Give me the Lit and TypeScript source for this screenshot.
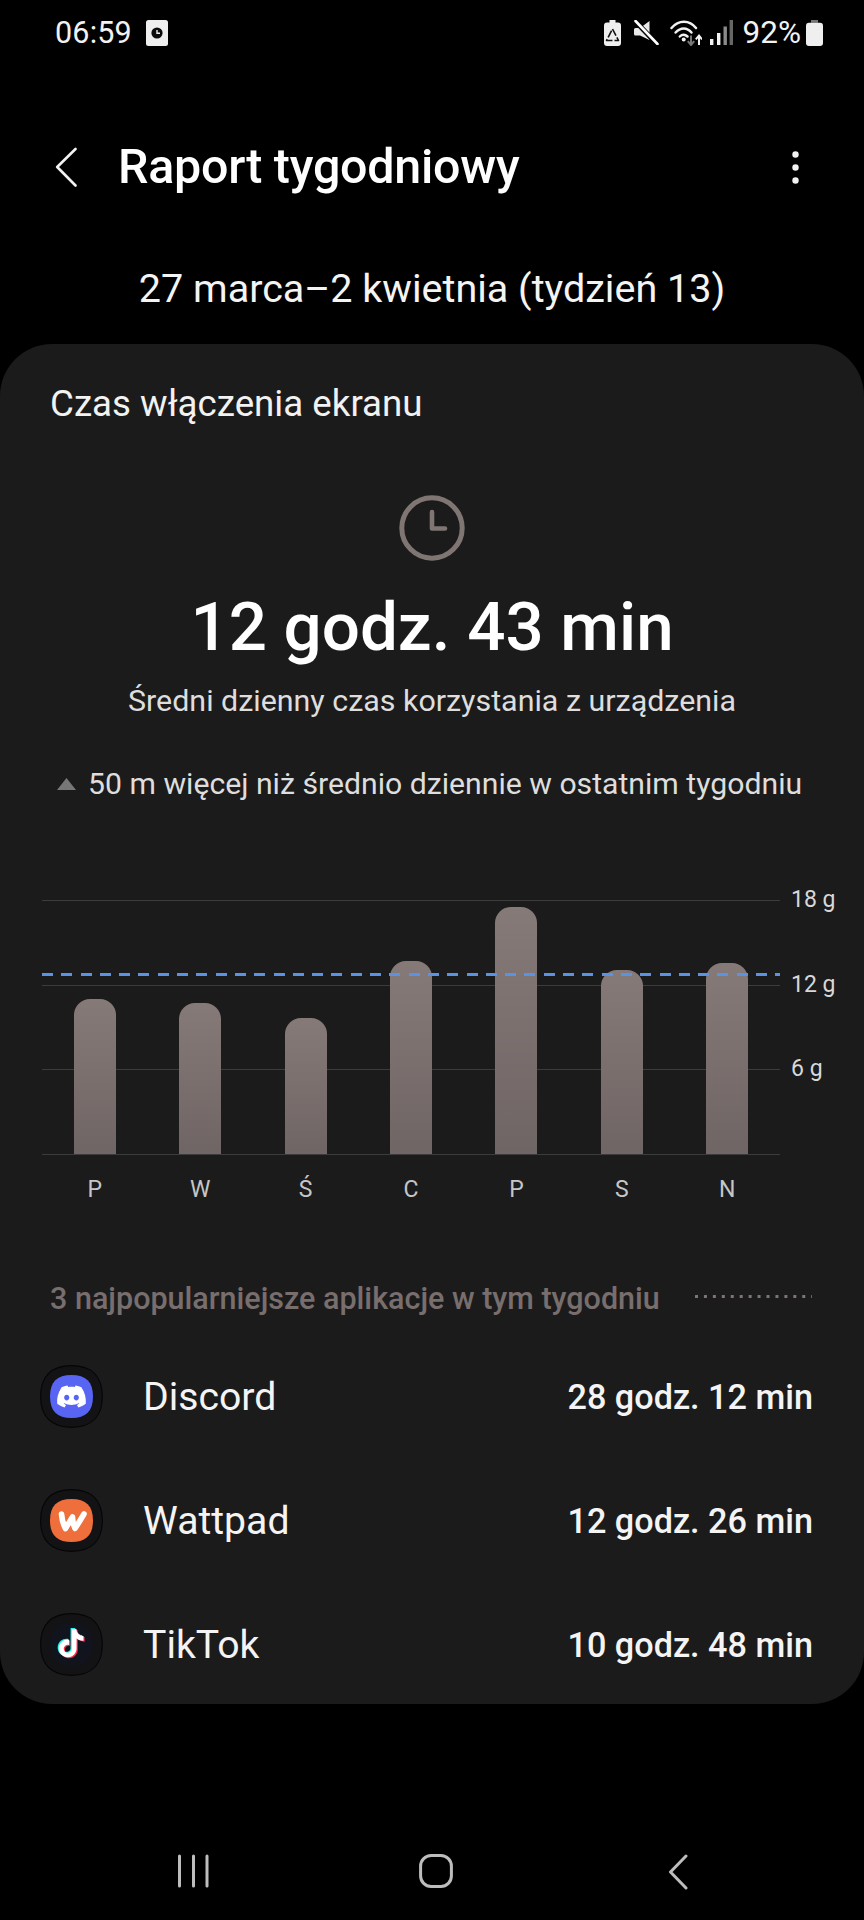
import { LitElement, html, css, svg } from "lit";
import { customElement } from "lit/decorators.js";

const BARS = [
  { d: "P", top: 999 },
  { d: "W", top: 1003 },
  { d: "Ś", top: 1018 },
  { d: "C", top: 961 },
  { d: "P", top: 907 },
  { d: "S", top: 970 },
  { d: "N", top: 963 },
];
const BASE = 1154;
const PLOT_TOP = 900;
const GRID = [
  { y: 900, label: "18 g" },
  { y: 985, label: "12 g" },
  { y: 1069, label: "6 g" },
  { y: 1154, label: "" },
];

const DISCORD =
  "M20.317 4.3698a19.7913 19.7913 0 00-4.8851-1.5152.0741.0741 0 00-.0785.0371c-.211.3753-.4447.8648-.6083 1.2495-1.8447-.2762-3.68-.2762-5.4868 0-.1636-.3933-.4058-.8742-.6177-1.2495a.077.077 0 00-.0785-.037 19.7363 19.7363 0 00-4.8852 1.515.0699.0699 0 00-.0321.0277C.5334 9.0458-.319 13.5799.0992 18.0578a.0824.0824 0 00.0312.0561c2.0528 1.5076 4.0413 2.4228 5.9929 3.0294a.0777.0777 0 00.0842-.0276c.4616-.6304.8731-1.2952 1.226-1.9942a.076.076 0 00-.0416-.1057c-.6528-.2476-1.2743-.5495-1.8722-.8923a.077.077 0 01-.0076-.1277c.1258-.0943.2517-.1923.3718-.2914a.0743.0743 0 01.0776-.0105c3.9278 1.7933 8.18 1.7933 12.0614 0a.0739.0739 0 01.0785.0095c.1202.099.246.1981.3728.2924a.077.077 0 01-.0066.1276 12.2986 12.2986 0 01-1.873.8914.0766.0766 0 00-.0407.1067c.3604.698.7719 1.3628 1.225 1.9932a.076.076 0 00.0842.0286c1.961-.6067 3.9495-1.5219 6.0023-3.0294a.077.077 0 00.0313-.0552c.5004-5.177-.8382-9.6739-3.5485-13.6604a.061.061 0 00-.0312-.0286zM8.02 15.3312c-1.1825 0-2.1569-1.0857-2.1569-2.419 0-1.3332.9555-2.4189 2.157-2.4189 1.2108 0 2.1757 1.0952 2.1568 2.419 0 1.3332-.9555 2.4189-2.1569 2.4189zm7.9748 0c-1.1825 0-2.1569-1.0857-2.1569-2.419 0-1.3332.9554-2.4189 2.1569-2.4189 1.2108 0 2.1757 1.0952 2.1568 2.419 0 1.3332-.946 2.4189-2.1568 2.4189Z";
const TIKTOK =
  "M12.525.02c1.31-.02 2.61-.01 3.91-.02.08 1.53.63 3.09 1.75 4.17 1.12 1.11 2.7 1.62 4.24 1.79v4.03c-1.44-.05-2.89-.35-4.2-.97-.57-.26-1.1-.59-1.62-.93-.01 2.92.01 5.84-.02 8.75-.08 1.4-.54 2.79-1.35 3.94-1.31 1.92-3.58 3.17-5.91 3.21-1.43.08-2.86-.31-4.08-1.03-2.02-1.19-3.44-3.37-3.65-5.71-.02-.5-.03-1-.01-1.49.18-1.9 1.12-3.72 2.58-4.96 1.66-1.44 3.98-2.13 6.15-1.72.02 1.48-.04 2.96-.04 4.44-.99-.32-2.15-.23-3.02.37-.63.41-1.11 1.04-1.36 1.75-.21.51-.15 1.07-.14 1.61.24 1.64 1.82 3.02 3.5 2.87 1.12-.01 2.19-.66 2.77-1.61.19-.33.4-.67.41-1.06.1-1.79.06-3.57.07-5.36.01-4.03-.01-8.05.02-12.07z";

const squircle = "M31.5 0C52 0 63 11 63 31.5S52 63 31.5 63 0 52 0 31.5 11 0 31.5 0Z";
const inner = "M21.5 0C36 0 43 7 43 21.5S36 43 21.5 43 0 36 0 21.5 7 0 21.5 0Z";

const appIcon = (fill: string, glyph: unknown) => html`<svg class="app-icon" viewBox="0 0 63 63" width="63" height="63">
  <path d=${squircle} fill="#131214" stroke="#060606" stroke-width="1.2" transform="translate(.6 .6) scale(.98)"></path>
  <g transform="translate(10 10)"><path d=${inner} fill=${fill}></path></g>
  ${glyph}
</svg>`;

const discordGlyph = svg`<path d=${DISCORD} fill="#fff" transform="translate(17.1 17.1) scale(1.2)"></path>`;
const wattpadGlyph = svg`
  <path d="M21.5 25 C22 31 23.5 36 25.5 39.5 L32.5 28 C32.5 32 33.5 36 35 39.5 C38 35 41 30 44 25" fill="none" stroke="#fff" stroke-width="5.6" stroke-linecap="round" stroke-linejoin="round"></path>`;
const tiktokGlyph = svg`
  <g transform="translate(17 16) scale(1.18)">
    <path d=${TIKTOK} fill="#25f4ee" transform="translate(-1 -.8)"></path>
    <path d=${TIKTOK} fill="#fe2c55" transform="translate(1 .8)"></path>
    <path d=${TIKTOK} fill="#fff"></path>
  </g>`;

const APPS = [
  { name: "Discord", time: "28 godz. 12 min", fill: "#5865f2", glyph: discordGlyph },
  { name: "Wattpad", time: "12 godz. 26 min", fill: "#ee6f3b", glyph: wattpadGlyph },
  { name: "TikTok", time: "10 godz. 48 min", fill: "#12141d", glyph: tiktokGlyph },
];

@customElement("app-root")
export class AppRoot extends LitElement {
  static styles = css`
    :host {
      display: block;
      width: 864px;
      height: 1920px;
      background: #000;
      color: #fff;
      font-family: Roboto, "Noto Sans", sans-serif;
      overflow: hidden;
    }
    svg { display: block; flex: none; }
    .status {
      height: 66px;
      box-sizing: border-box;
      padding: 20px 41px 0 55px;
      display: flex;
      align-items: flex-start;
    }
    .time {
      font-size: 30.5px;
      line-height: 26px;
      color: #f2f2f2;
      letter-spacing: 0.2px;
      width: 91px;
    }
    .status-right {
      margin-left: auto;
      display: flex;
      align-items: flex-start;
    }
    .pct {
      font-size: 31.5px;
      line-height: 26px;
      color: #f2f2f2;
      margin: 0 5px 0 10px;
    }
    .appbar {
      height: 202px;
      display: flex;
      align-items: center;
      padding-left: 55px;
      padding-right: 65px;
      box-sizing: border-box;
    }
    .appbar h1 {
      margin: 0 0 0 41px;
      font-size: 48.4px;
      font-weight: 500;
      line-height: 56px;
      letter-spacing: -0.25px;
      flex: 1;
    }
    .date {
      height: 76px;
      box-sizing: border-box;
      margin: 0;
      font-size: 39.5px;
      line-height: 42px;
      text-align: center;
      color: #f4f4f4;
    }
    .card {
      height: 1360px;
      box-sizing: border-box;
      background: #1c1b1c;
      border-radius: 52px;
      padding-top: 38px;
      display: flex;
      flex-direction: column;
    }
    .card-title {
      margin: 0 0 0 50px;
      font-size: 36.7px;
      font-weight: 400;
      line-height: 44px;
      color: #f2f2f2;
    }
    .clock { margin: 69px auto 0; }
    .big {
      margin: 26px 0 0;
      font-size: 67.3px;
      font-weight: 500;
      line-height: 80px;
      text-align: center;
    }
    .sub {
      margin: 13.5px 0 0;
      font-size: 30.4px;
      line-height: 40px;
      text-align: center;
      color: #dedede;
    }
    .delta {
      margin: 43px 0 0 57px;
      display: flex;
      align-items: center;
      gap: 12px;
      font-size: 30.2px;
      line-height: 40px;
      color: #dedede;
    }
    .chart {
      margin: 0 0 0 42px;
      position: relative;
      width: 738px;
    }
    .plot {
      margin-top: 96px;
      position: relative;
      height: 255px;
    }
    .grid-line {
      position: absolute;
      left: 0;
      width: 738px;
      height: 1.5px;
      background: #3c3b3d;
    }
    .grid-label {
      position: absolute;
      left: 749px;
      top: -15px;
      font-size: 23px;
      line-height: 30px;
      color: #d8d8d8;
      white-space: nowrap;
    }
    .bars, .days { display: grid; grid-template-columns: repeat(7, 1fr); justify-items: center; }
    .bars { position: absolute; inset: 0 0 1px 0; align-items: end; }
    .bar {
      width: 42px;
      border-radius: 16px 16px 0 0;
      background: linear-gradient(#867a78, #6f6564);
    }
    .avg {
      position: absolute;
      left: 0;
      width: 738px;
      height: 3px;
      background: repeating-linear-gradient(90deg, #5a93e6 0 11px, transparent 11px 19.3px);
    }
    .days {
      margin-top: 20px;
      font-size: 23px;
      line-height: 30px;
      color: #c6c6c6;
    }
    .section {
      margin: 75px 52px 0 50px;
      display: flex;
      align-items: center;
      justify-content: space-between;
      font-size: 30.5px;
      font-weight: 500;
      line-height: 38px;
      color: #786e6d;
    }
    .dots {
      width: 117px;
      height: 3px;
      margin-bottom: 4px;
      background: radial-gradient(circle at 1.5px 1.5px, #7f7776 1.4px, transparent 1.6px) 0 0 / 8.95px 3px repeat-x;
    }
    .apps { margin-top: 47px; display: flex; flex-direction: column; gap: 61px; }
    .app {
      height: 63px;
      display: flex;
      align-items: center;
      padding: 0 51px 0 40px;
    }
    .app-name {
      margin: 2px 0 0 40px;
      font-size: 39.2px;
      color: #f4f4f4;
      flex: 1;
    }
    .app-time {
      margin-top: 2px;
      font-size: 34.2px;
      font-weight: 500;
      color: #f4f4f4;
    }
    .nav {
      height: 216px;
      display: flex;
      align-items: flex-start;
      padding-top: 150px;
      box-sizing: border-box;
      position: relative;
    }
    .nav-item { flex: none; }
    .nav-recents { margin-left: 177px; }
    .nav-home { margin-left: 210px; }
    .nav-back { margin-left: 215px; }
  `;

  private chevron() {
    return html`<svg width="22" height="40" viewBox="0 0 22 40">
      <path d="M20.5 2 L2.2 20 L20.5 38.5" fill="none" stroke="#f2f2f2" stroke-width="2.6" stroke-linecap="round" stroke-linejoin="round"></path>
    </svg>`;
  }

  private statusIcons() {
    return html`
      <svg width="17" height="26" viewBox="0 0 17 26">
        <path d="M5.5 0h6v2.5h2.5a3 3 0 0 1 3 3V23a3 3 0 0 1-3 3H3a3 3 0 0 1-3-3V5.5a3 3 0 0 1 3-3h2.5Z" fill="#efefef"></path>
        <path d="M8.5 9 L14.5 20.5 H2.5 Z" fill="none" stroke="#111" stroke-width="1.6" stroke-dasharray="7.5 2" stroke-linejoin="round"></path>
      </svg>
      <svg width="25" height="25" viewBox="0 0 25 25" style="margin-left:13px">
        <path d="M0 9.5 a1.5 1.5 0 0 1 1.5 -1.5 H6 L15.5 1 V20 L6 15.5 H1.5 A1.5 1.5 0 0 1 0 14 Z" fill="#e8e8e8"></path>
        <path d="M1 1 L23 24" stroke="#000" stroke-width="5"></path>
        <path d="M1.5 1 L23.5 24" stroke="#fff" stroke-width="2.6" stroke-linecap="round"></path>
      </svg>
      <svg width="32" height="26" viewBox="0 0 32 26" style="margin-left:11px">
        <g fill="none" stroke="#f2f2f2" stroke-width="2.5" stroke-linecap="round">
          <path d="M1.5 8 C8.5 -0.5 19.5 -0.5 26 8"></path>
          <path d="M5.6 12.5 C10.5 7 17 7 21.5 12.5"></path>
          <path d="M9.8 16.5 C12.2 14 15 14 17.5 16.5"></path>
        </g>
        <circle cx="13.7" cy="19.6" r="2" fill="#f2f2f2"></circle>
        <path d="M21 15.5 V24.5 M17.8 21.2 L21 25 L24.2 21.2" fill="none" stroke="#777" stroke-width="2"></path>
        <path d="M29 25 V16 M25.8 19.4 L29 15.6 L32 19.4" fill="none" stroke="#f2f2f2" stroke-width="2"></path>
      </svg>
      <svg width="23" height="25" viewBox="0 0 23 25" style="margin-left:8px">
        <rect x="0" y="19" width="3.4" height="6" fill="#f2f2f2"></rect>
        <rect x="7" y="13" width="3.4" height="12" fill="#f2f2f2"></rect>
        <rect x="13.5" y="6.5" width="3.4" height="18.5" fill="#8a8a8a"></rect>
        <rect x="19.6" y="0" width="3.4" height="25" fill="#666"></rect>
      </svg>`;
  }

  render() {
    return html`
      <div class="status">
        <span class="time">06:59</span>
        <svg width="22" height="26" viewBox="0 0 22 26">
          <rect width="22" height="26" rx="2.5" fill="#efefef"></rect>
          <circle cx="11" cy="13" r="5.6" fill="#0c0c0c"></circle>
          <path d="M11 10V13.3H14" fill="none" stroke="#efefef" stroke-width="1.4"></path>
        </svg>
        <div class="status-right">
          ${this.statusIcons()}
          <span class="pct">92%</span>
          <svg width="17" height="26" viewBox="0 0 17 26">
            <path d="M5 0h7v2.8H5Z" fill="#777"></path>
            <rect y="2.8" width="17" height="23.2" rx="3" fill="#efefef"></rect>
          </svg>
        </div>
      </div>

      <header class="appbar">
        ${this.chevron()}
        <h1>Raport tygodniowy</h1>
        <svg width="7" height="33" viewBox="0 0 7 33">
          <circle cx="3.5" cy="3.5" r="3.2" fill="#f2f2f2"></circle>
          <circle cx="3.5" cy="16.5" r="3.2" fill="#f2f2f2"></circle>
          <circle cx="3.5" cy="29.5" r="3.2" fill="#f2f2f2"></circle>
        </svg>
      </header>

      <p class="date">27 marca–2 kwietnia (tydzień 13)</p>

      <section class="card">
        <h2 class="card-title">Czas włączenia ekranu</h2>
        <svg class="clock" width="66" height="66" viewBox="0 0 66 66">
          <circle cx="33" cy="33" r="30.2" fill="none" stroke="#7f7573" stroke-width="5"></circle>
          <path d="M33 17V33.5H46" fill="none" stroke="#7f7573" stroke-width="4.6" stroke-linecap="round" stroke-linejoin="round"></path>
        </svg>
        <div class="big">12 godz. 43 min</div>
        <p class="sub">Średni dzienny czas korzystania z urządzenia</p>
        <div class="delta">
          <svg width="19" height="12" viewBox="0 0 19 12"><path d="M9.5 0 L19 12 H0 Z" fill="#777"></path></svg>
          <span>50 m więcej niż średnio dziennie w ostatnim tygodniu</span>
        </div>

        <div class="chart">
          <div class="plot">
            ${GRID.map(
              (g) => html`<div class="grid-line" style="top:${g.y - PLOT_TOP}px">
                ${g.label ? html`<span class="grid-label">${g.label}</span>` : ""}
              </div>`
            )}
            <div class="bars">
              ${BARS.map((b) => html`<div class="bar" style="height:${BASE - b.top}px"></div>`)}
            </div>
            <div class="avg" style="top:${974 - PLOT_TOP - 1}px"></div>
          </div>
          <div class="days">${BARS.map((b) => html`<span>${b.d}</span>`)}</div>
        </div>

        <div class="section">
          <span>3 najpopularniejsze aplikacje w tym tygodniu</span>
          <span class="dots"></span>
        </div>

        <div class="apps">
          ${APPS.map(
            (a) => html`<div class="app">
              ${appIcon(a.fill, a.glyph)}
              <span class="app-name">${a.name}</span>
              <span class="app-time">${a.time}</span>
            </div>`
          )}
        </div>
      </section>

      <nav class="nav">
        <svg class="nav-item nav-recents" width="32" height="34" viewBox="0 0 32 34">
          <g stroke="#bdbdbd" stroke-width="3" stroke-linecap="round">
            <path d="M2.5 2V32M16.5 2V32M30 2V32"></path>
          </g>
        </svg>
        <svg class="nav-item nav-home" width="34" height="34" viewBox="0 0 34 34">
          <rect x="1.6" y="1.6" width="30.8" height="30.8" rx="10.5" fill="none" stroke="#bdbdbd" stroke-width="3"></rect>
        </svg>
        <svg class="nav-item nav-back" width="20" height="36" viewBox="0 0 20 36">
          <path d="M18 2 L2.5 18 L18 34" fill="none" stroke="#bdbdbd" stroke-width="3" stroke-linecap="round" stroke-linejoin="round"></path>
        </svg>
      </nav>
    `;
  }
}
